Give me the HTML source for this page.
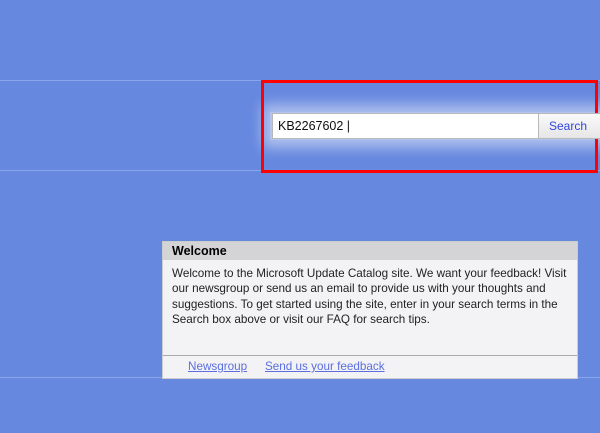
<!DOCTYPE html>
<html><head><meta charset="utf-8"><style>
html,body{margin:0;padding:0;}
body{width:600px;height:433px;background:#6788df;position:relative;overflow:hidden;font-family:"Liberation Sans",sans-serif;}
.hl{position:absolute;left:0;width:600px;height:1px;background:#8aa6ea;}
.red{position:absolute;left:261px;top:80px;width:331px;height:87px;border:3px solid #f00;}
.glow{position:absolute;left:270px;top:112px;width:330px;height:28px;background:rgba(255,255,255,0.5);box-shadow:0 0 12px 8px rgba(255,255,255,0.45);}
.inp{position:absolute;left:272px;top:113px;width:265px;height:24px;background:#fff;border:1px solid #b8b8b8;font-size:12.5px;line-height:24px;color:#111;}
.inp span{padding-left:5px;}
.btn{position:absolute;left:538px;top:113px;width:62px;height:26px;background:linear-gradient(#fafafa,#e6e6e6);border:1px solid #b8b8b8;border-right:none;font-size:12px;line-height:24px;color:#3344dd;padding-left:10px;box-sizing:border-box;}
.panel{position:absolute;left:162px;top:241px;width:414px;height:136px;background:#f3f3f5;border:1px solid #ccc;}
.hd{height:18px;background:#d4d4d6;font-weight:bold;font-size:12.5px;line-height:19px;padding-left:9px;color:#000;}
.tx{font-size:11.7px;line-height:15.3px;color:#222;padding:6px 6px 0 9px;}
.sep{position:absolute;left:0;top:113px;width:414px;height:1px;background:#aaa;}
.lk{position:absolute;top:118px;font-size:11.7px;color:#5a6ee0;text-decoration:underline;}
</style></head><body>
<div class="hl" style="top:80px"></div>
<div class="hl" style="top:170px"></div>
<div class="hl" style="top:377px"></div>
<div class="glow"></div>
<div class="red"></div>
<div class="inp"><span>KB2267602 |</span></div>
<div class="btn">Search</div>
<div class="panel">
<div class="hd">Welcome</div>
<div class="tx">Welcome to the Microsoft Update Catalog site. We want your feedback! Visit<br>our newsgroup or send us an email to provide us with your thoughts and<br>suggestions. To get started using the site, enter in your search terms in the<br>Search box above or visit our FAQ for search tips.</div>
<div class="sep"></div>
<span class="lk" style="left:25px">Newsgroup</span>
<span class="lk" style="left:102px">Send us your feedback</span>
</div>
</body></html>
